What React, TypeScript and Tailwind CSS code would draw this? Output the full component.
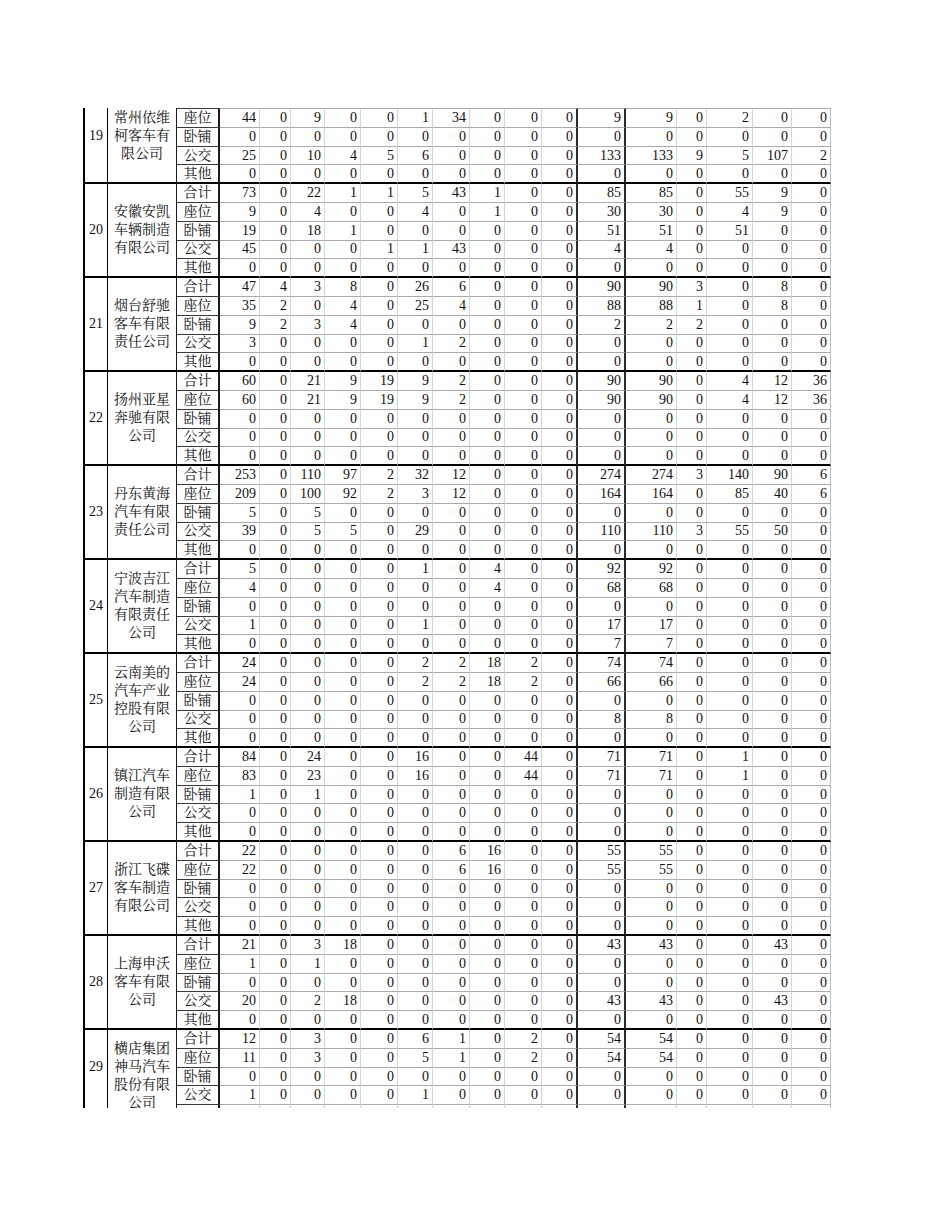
type Company = { no: number; name: string[]; rows: number[][]; hidden: number; shiftNo?: boolean };

const CATS = ['合计', '座位', '卧铺', '公交', '其他'];
const Z = [0, 0, 0, 0, 0, 0, 0, 0, 0, 0, 0, 0, 0, 0, 0, 0];

// row 0 of 19 and row 4 of 29 fall outside the page: drawn empty and clipped
const companies: Company[] = [
  {
    no: 19,
    name: ['常州依维', '柯客车有', '限公司'],
    hidden: 0,
    rows: [
      Z,
      [44, 0, 9, 0, 0, 1, 34, 0, 0, 0, 9, 9, 0, 2, 0, 0],
      Z,
      [25, 0, 10, 4, 5, 6, 0, 0, 0, 0, 133, 133, 9, 5, 107, 2],
      Z,
    ],
  },
  {
    no: 20,
    name: ['安徽安凯', '车辆制造', '有限公司'],
    hidden: -1,
    rows: [
      [73, 0, 22, 1, 1, 5, 43, 1, 0, 0, 85, 85, 0, 55, 9, 0],
      [9, 0, 4, 0, 0, 4, 0, 1, 0, 0, 30, 30, 0, 4, 9, 0],
      [19, 0, 18, 1, 0, 0, 0, 0, 0, 0, 51, 51, 0, 51, 0, 0],
      [45, 0, 0, 0, 1, 1, 43, 0, 0, 0, 4, 4, 0, 0, 0, 0],
      Z,
    ],
  },
  {
    no: 21,
    name: ['烟台舒驰', '客车有限', '责任公司'],
    hidden: -1,
    rows: [
      [47, 4, 3, 8, 0, 26, 6, 0, 0, 0, 90, 90, 3, 0, 8, 0],
      [35, 2, 0, 4, 0, 25, 4, 0, 0, 0, 88, 88, 1, 0, 8, 0],
      [9, 2, 3, 4, 0, 0, 0, 0, 0, 0, 2, 2, 2, 0, 0, 0],
      [3, 0, 0, 0, 0, 1, 2, 0, 0, 0, 0, 0, 0, 0, 0, 0],
      Z,
    ],
  },
  {
    no: 22,
    name: ['扬州亚星', '奔驰有限', '公司'],
    hidden: -1,
    rows: [
      [60, 0, 21, 9, 19, 9, 2, 0, 0, 0, 90, 90, 0, 4, 12, 36],
      [60, 0, 21, 9, 19, 9, 2, 0, 0, 0, 90, 90, 0, 4, 12, 36],
      Z,
      Z,
      Z,
    ],
  },
  {
    no: 23,
    name: ['丹东黄海', '汽车有限', '责任公司'],
    hidden: -1,
    rows: [
      [253, 0, 110, 97, 2, 32, 12, 0, 0, 0, 274, 274, 3, 140, 90, 6],
      [209, 0, 100, 92, 2, 3, 12, 0, 0, 0, 164, 164, 0, 85, 40, 6],
      [5, 0, 5, 0, 0, 0, 0, 0, 0, 0, 0, 0, 0, 0, 0, 0],
      [39, 0, 5, 5, 0, 29, 0, 0, 0, 0, 110, 110, 3, 55, 50, 0],
      Z,
    ],
  },
  {
    no: 24,
    name: ['宁波吉江', '汽车制造', '有限责任', '公司'],
    hidden: -1,
    rows: [
      [5, 0, 0, 0, 0, 1, 0, 4, 0, 0, 92, 92, 0, 0, 0, 0],
      [4, 0, 0, 0, 0, 0, 0, 4, 0, 0, 68, 68, 0, 0, 0, 0],
      Z,
      [1, 0, 0, 0, 0, 1, 0, 0, 0, 0, 17, 17, 0, 0, 0, 0],
      [0, 0, 0, 0, 0, 0, 0, 0, 0, 0, 7, 7, 0, 0, 0, 0],
    ],
  },
  {
    no: 25,
    name: ['云南美的', '汽车产业', '控股有限', '公司'],
    hidden: -1,
    rows: [
      [24, 0, 0, 0, 0, 2, 2, 18, 2, 0, 74, 74, 0, 0, 0, 0],
      [24, 0, 0, 0, 0, 2, 2, 18, 2, 0, 66, 66, 0, 0, 0, 0],
      Z,
      [0, 0, 0, 0, 0, 0, 0, 0, 0, 0, 8, 8, 0, 0, 0, 0],
      Z,
    ],
  },
  {
    no: 26,
    name: ['镇江汽车', '制造有限', '公司'],
    hidden: -1,
    rows: [
      [84, 0, 24, 0, 0, 16, 0, 0, 44, 0, 71, 71, 0, 1, 0, 0],
      [83, 0, 23, 0, 0, 16, 0, 0, 44, 0, 71, 71, 0, 1, 0, 0],
      [1, 0, 1, 0, 0, 0, 0, 0, 0, 0, 0, 0, 0, 0, 0, 0],
      Z,
      Z,
    ],
  },
  {
    no: 27,
    name: ['浙江飞碟', '客车制造', '有限公司'],
    hidden: -1,
    rows: [
      [22, 0, 0, 0, 0, 0, 6, 16, 0, 0, 55, 55, 0, 0, 0, 0],
      [22, 0, 0, 0, 0, 0, 6, 16, 0, 0, 55, 55, 0, 0, 0, 0],
      Z,
      Z,
      Z,
    ],
  },
  {
    no: 28,
    name: ['上海申沃', '客车有限', '公司'],
    hidden: -1,
    rows: [
      [21, 0, 3, 18, 0, 0, 0, 0, 0, 0, 43, 43, 0, 0, 43, 0],
      [1, 0, 1, 0, 0, 0, 0, 0, 0, 0, 0, 0, 0, 0, 0, 0],
      Z,
      [20, 0, 2, 18, 0, 0, 0, 0, 0, 0, 43, 43, 0, 0, 43, 0],
      Z,
    ],
  },
  {
    no: 29,
    name: ['横店集团', '神马汽车', '股份有限', '公司'],
    hidden: 4,
    shiftNo: true,
    rows: [
      [12, 0, 3, 0, 0, 6, 1, 0, 2, 0, 54, 54, 0, 0, 0, 0],
      [11, 0, 3, 0, 0, 5, 1, 0, 2, 0, 54, 54, 0, 0, 0, 0],
      Z,
      [1, 0, 0, 0, 0, 1, 0, 0, 0, 0, 0, 0, 0, 0, 0, 0],
      Z,
    ],
  },
];

function rightBorder(i: number) {
  if (i === 9 || i === 10) return 'border-r-2 border-r-[#2b2b2b]';
  if (i === 15) return 'border-r border-r-[#bdbdbd]';
  return 'border-r border-r-[#d6d6d6]';
}

function CompanyBlock({ c }: { c: Company }) {
  return (
    <>
      <div
        className={`row-span-5 flex items-center justify-center border-l-2 border-l-black border-r border-r-black border-b-2 border-b-black ${
          c.shiftNo ? 'pb-[19px]' : ''
        }`}
      >
        {c.no}
      </div>
      <div className="row-span-5 flex flex-col items-center justify-center border-r border-r-[#1a1a1a] border-b-2 border-b-black leading-[18px] text-center">
        {c.name.map((line) => (
          <div key={line}>{line}</div>
        ))}
      </div>
      {c.rows.map((vals, r) => {
        const last = r === 4;
        const blank = r === c.hidden;
        return (
          <div key={r} className="contents">
            <div
              className={`flex items-center justify-center border-r-2 border-r-[#1a1a1a] ${
                last ? 'border-b-2 border-b-black' : 'border-b border-b-[#3a3a3a]'
              }`}
            >
              {blank ? '' : CATS[r]}
            </div>
            {vals.map((v, i) => (
              <div
                key={i}
                className={`flex items-center justify-end pr-[3px] ${rightBorder(i)} ${
                  last ? 'border-b-2 border-b-black' : 'border-b border-b-[#ababab]'
                }`}
              >
                {blank ? '' : v}
              </div>
            ))}
          </div>
        );
      })}
    </>
  );
}

export default function App() {
  return (
    <div
      className="w-[950px] h-[1230px] bg-white pt-[108px] pl-[83px] text-[14px] leading-[18px] text-[#111]"
      style={{ fontFamily: '"Liberation Serif", "Noto Serif CJK SC", "Noto Sans CJK SC", serif' }}
    >
      {/* sheet clipped at the page edges */}
      <div className="w-[748px] h-[1000px] overflow-hidden">
        <div className="grid grid-cols-[25px_69px_43px_40px_31px_34px_36px_37px_35px_37px_35px_37px_36px_48px_51px_30px_46px_39px_39px] auto-rows-[18.8px] mt-[-17.8px]">
          {companies.map((c) => (
            <CompanyBlock key={c.no} c={c} />
          ))}
        </div>
      </div>
    </div>
  );
}
